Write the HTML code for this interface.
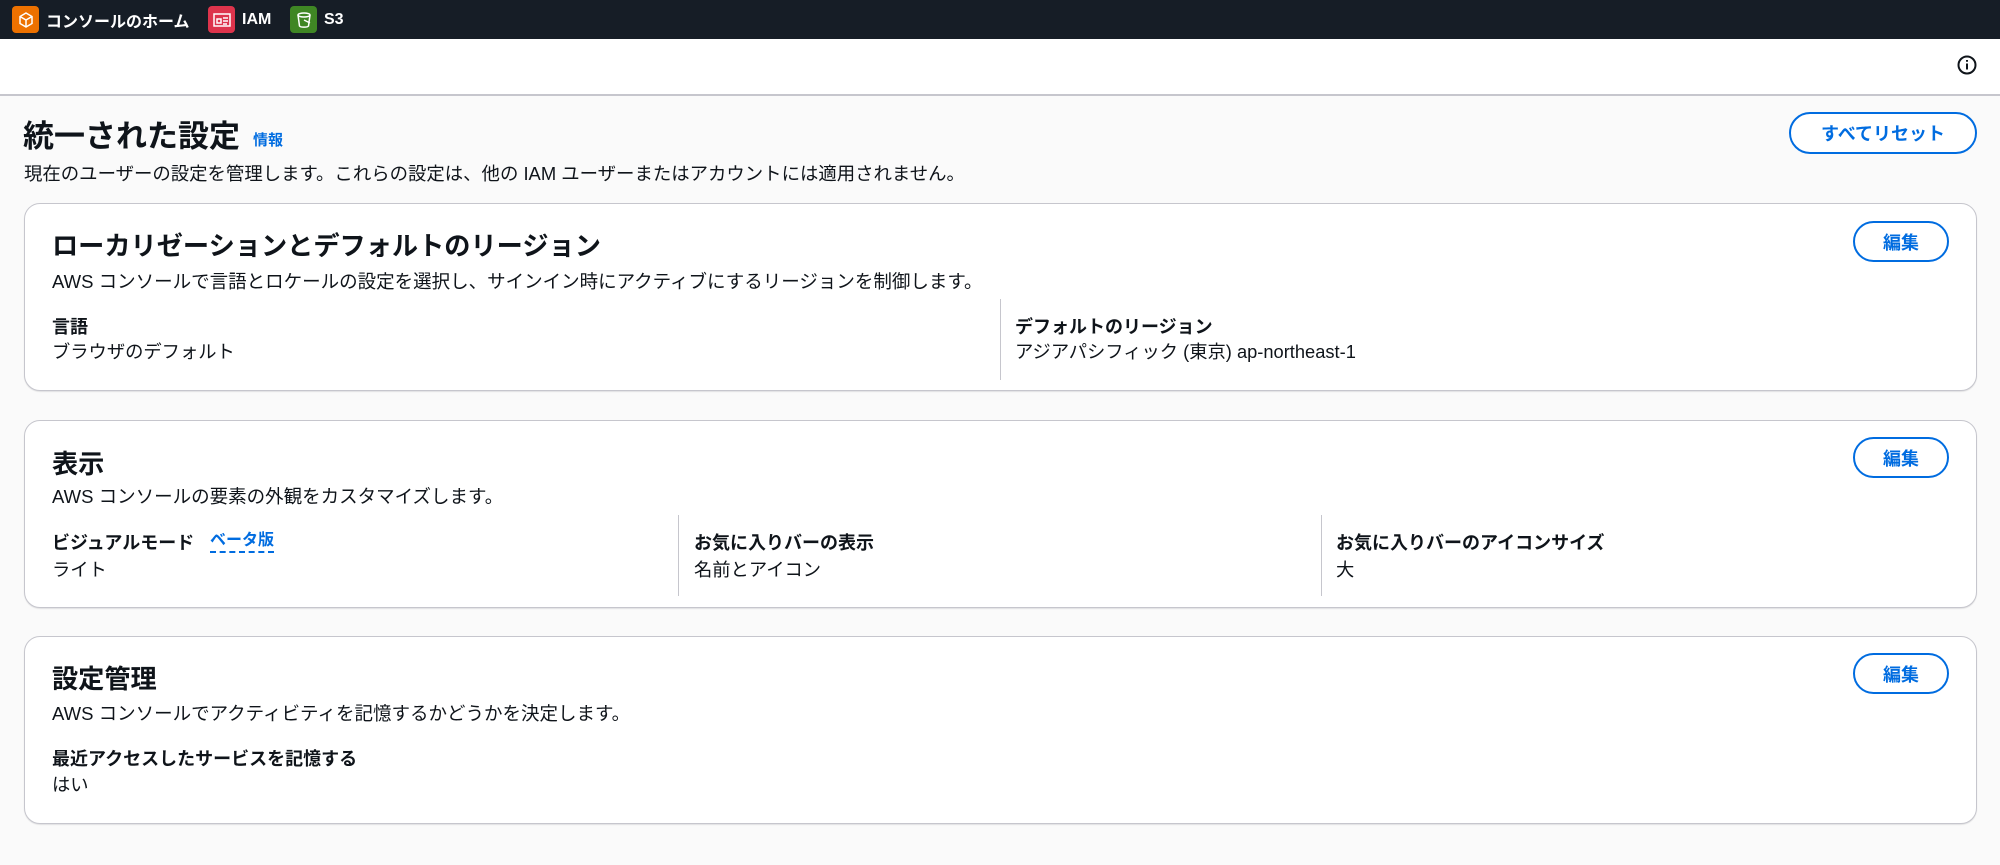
<!DOCTYPE html>
<html><head><meta charset="utf-8"><style>
*{box-sizing:border-box;margin:0;padding:0}
body{width:2000px;height:865px;background:#fafafa;font-family:"Liberation Sans","Noto Sans CJK JP",sans-serif;color:#0f141a;position:relative;overflow:hidden}
.top{position:absolute;left:0;top:0;width:2000px;height:39px;background:#161d26}
.top .it{position:absolute;top:0;height:39px;display:flex;align-items:center;color:#fff;font-size:16px;font-weight:bold}
.ic{width:27px;height:27px;border-radius:4px;margin-right:7px;display:flex;align-items:center;justify-content:center}
.hdr{position:absolute;left:0;top:39px;width:2000px;height:57px;background:#fff;border-bottom:2px solid #c6c6cd}
.abs{position:absolute;white-space:nowrap}
.btn{position:absolute;border:2px solid #006ce0;border-radius:22px;color:#006ce0;font-weight:bold;font-size:18px;display:flex;align-items:center;justify-content:center;background:#fff}
.card{position:absolute;left:24px;width:1953px;background:#fff;border:1px solid #c6c6cd;border-radius:16px;box-shadow:0 1px 1px rgba(0,7,22,.1)}
.ct{position:absolute;left:27px;font-size:26.2px;font-weight:bold;white-space:nowrap}
.cd{position:absolute;left:27px;font-size:18.5px;color:#0f141a;white-space:nowrap}
.lb{position:absolute;font-size:18px;font-weight:bold;white-space:nowrap}
.vl{position:absolute;font-size:18.3px;white-space:nowrap}
.dv{position:absolute;width:1px;background:#c6c6cd}
</style></head><body>
<div class="top">
 <div class="it" style="left:12px"><div class="ic" style="background:#ed7100"><svg width="18" height="18" viewBox="0 0 18 18" fill="none" stroke="#fff" stroke-width="1.5"><path d="M9 2l6 3.5v7L9 16l-6-3.5v-7z M3 5.5L9 9l6-3.5 M9 9v7"/></svg></div>コンソールのホーム</div>
 <div class="it" style="left:208px"><div class="ic" style="background:#dd344c"><svg width="18" height="16" viewBox="0 0 18 16" fill="none" stroke="#fff" stroke-width="1.5"><rect x="1" y="2" width="16" height="12"/><rect x="4" y="7" width="4" height="4"/><path d="M10 6h5M10 9h5M10 12h4"/></svg></div>IAM</div>
 <div class="it" style="left:290px"><div class="ic" style="background:#3f8624"><svg width="18" height="18" viewBox="0 0 18 18" fill="none" stroke="#fff" stroke-width="1.5"><ellipse cx="9" cy="4" rx="6" ry="2"/><path d="M3 4l1.5 11c1 1.5 8 1.5 9 0L15 4 M9 9l6 3"/></svg></div>S3</div>
</div>
<div class="hdr"><svg class="abs" style="left:1957px;top:16px" width="20" height="20" viewBox="0 0 20 20" fill="none" stroke="#0f141a" stroke-width="2"><circle cx="10" cy="10" r="8.5"/><path d="M10 8.5v6M10 5v1.8"/></svg></div>
<div class="abs" style="left:23px;top:111px;font-size:31px;font-weight:bold">統一された設定</div>
<div class="abs" style="left:253px;top:129px;font-size:15px;font-weight:bold;color:#006ce0">情報</div>
<div class="abs" style="left:24px;top:160px;font-size:18.4px">現在のユーザーの設定を管理します。これらの設定は、他の IAM ユーザーまたはアカウントには適用されません。</div>
<div class="btn" style="left:1789px;top:112px;width:188px;height:42px">すべてリセット</div>

<div class="card" style="top:203px;height:188px">
 <div class="ct" style="top:21px">ローカリゼーションとデフォルトのリージョン</div>
 <div class="cd" style="top:64px">AWS コンソールで言語とロケールの設定を選択し、サインイン時にアクティブにするリージョンを制御します。</div>
 <div class="lb" style="left:27px;top:109px">言語</div><div class="vl" style="left:27px;top:134px">ブラウザのデフォルト</div>
 <div class="dv" style="left:975px;top:95px;height:81px"></div>
 <div class="lb" style="left:990px;top:109px">デフォルトのリージョン</div><div class="vl" style="left:990px;top:134px">アジアパシフィック (東京) ap-northeast-1</div>
</div>
<div class="btn" style="left:1853px;top:221px;width:96px;height:41px">編集</div>

<div class="card" style="top:420px;height:188px">
 <div class="ct" style="top:22px">表示</div>
 <div class="cd" style="top:62px">AWS コンソールの要素の外観をカスタマイズします。</div>
 <div class="lb" style="left:27px;top:108px">ビジュアルモード</div>
 <div class="abs" style="left:185px;top:110px;font-size:16px;font-weight:bold;color:#006ce0;border-bottom:2px dashed #006ce0;line-height:20px">ベータ版</div>
 <div class="vl" style="left:27px;top:135px">ライト</div>
 <div class="dv" style="left:653px;top:94px;height:81px"></div>
 <div class="lb" style="left:669px;top:108px">お気に入りバーの表示</div><div class="vl" style="left:669px;top:135px">名前とアイコン</div>
 <div class="dv" style="left:1296px;top:94px;height:81px"></div>
 <div class="lb" style="left:1311px;top:108px">お気に入りバーのアイコンサイズ</div><div class="vl" style="left:1311px;top:135px">大</div>
</div>
<div class="btn" style="left:1853px;top:437px;width:96px;height:41px">編集</div>

<div class="card" style="top:636px;height:188px">
 <div class="ct" style="top:21px">設定管理</div>
 <div class="cd" style="top:63px">AWS コンソールでアクティビティを記憶するかどうかを決定します。</div>
 <div class="lb" style="left:27px;top:108px">最近アクセスしたサービスを記憶する</div><div class="vl" style="left:27px;top:134px">はい</div>
</div>
<div class="btn" style="left:1853px;top:653px;width:96px;height:41px">編集</div>
</body></html>
